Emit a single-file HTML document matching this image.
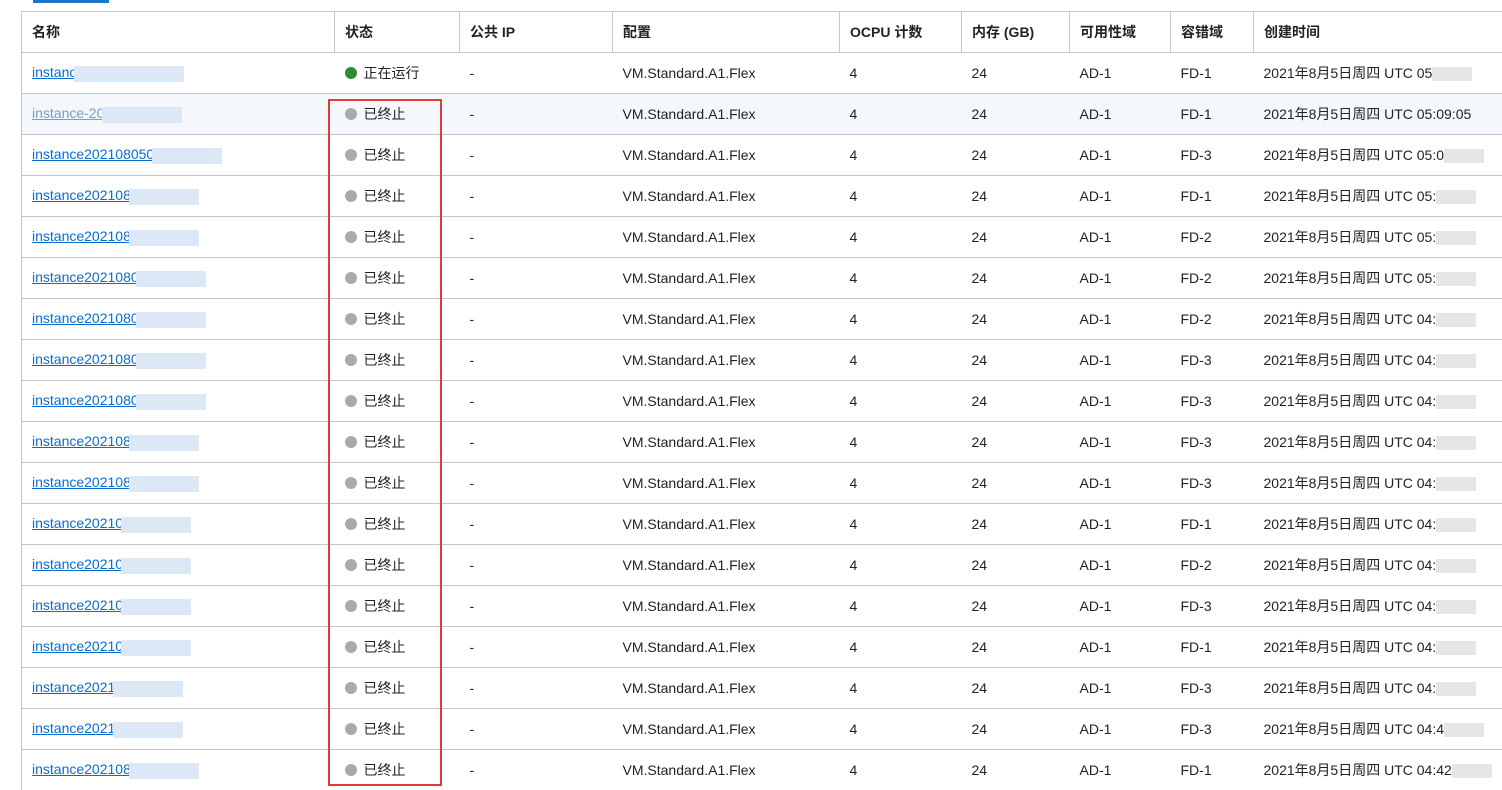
<!DOCTYPE html>
<html><head><meta charset="utf-8"><style>
body{margin:0;background:#fff;width:1502px;height:788px;overflow:hidden;position:relative;font-family:"Liberation Sans","Noto Sans CJK SC",sans-serif;font-size:14px;color:#222}
.bar{position:absolute;left:33px;top:0;width:76px;height:3px;background:#1c76c9}
table{position:absolute;left:21px;top:11px;border-collapse:collapse;table-layout:fixed;width:1490px}
td,th{height:40px;border-top:1px solid #c3c6cc;padding:0 0 0 10px;text-align:left;white-space:nowrap;overflow:hidden}
th{font-weight:bold;border-left:1px solid #c3c6cc;height:40px}
tr td:first-child,tr th:first-child{border-left:1px solid #c3c6cc}
tr.h td{background:#f4f7fc}
a{color:#0a6ccf;text-decoration:underline}
tr.h a{color:#6b9fd8}
.d{display:inline-block;width:12px;height:12px;border-radius:50%;background:#aaa;vertical-align:-1px;margin-right:7px}
.g{background:#2e8b36}
.blur{display:inline-block;width:70px;height:16px;background:#dde8f6;vertical-align:middle;margin-left:-10px}
.red{position:absolute;left:328px;top:99px;width:110px;height:683px;border:2px solid #e53935}
.tb{display:inline-block;width:40px;height:14px;background:#e6e6e6;vertical-align:middle}
</style></head><body>
<div class="bar"></div>
<table>
<colgroup><col style="width:313px"><col style="width:125px"><col style="width:153px"><col style="width:227px"><col style="width:122px"><col style="width:108px"><col style="width:101px"><col style="width:83px"><col style="width:258px"></colgroup>
<tr><th>名称</th><th>状态</th><th>公共 IP</th><th>配置</th><th>OCPU 计数</th><th>内存 (GB)</th><th>可用性域</th><th>容错域</th><th>创建时间</th></tr>
<tr><td><a>instance</a><span class="blur" style="width:110px"></span></td><td><span class="d g"></span>正在运行</td><td>-</td><td>VM.Standard.A1.Flex</td><td>4</td><td>24</td><td>AD-1</td><td>FD-1</td><td>2021年8月5日周四 UTC 05<span class="tb"></span></td></tr>
<tr class="h"><td><a>instance-202</a><span class="blur" style="width:80px"></span></td><td><span class="d"></span>已终止</td><td>-</td><td>VM.Standard.A1.Flex</td><td>4</td><td>24</td><td>AD-1</td><td>FD-1</td><td>2021年8月5日周四 UTC 05:09:05</td></tr>
<tr><td><a>instance2021080500</a><span class="blur"></span></td><td><span class="d"></span>已终止</td><td>-</td><td>VM.Standard.A1.Flex</td><td>4</td><td>24</td><td>AD-1</td><td>FD-3</td><td>2021年8月5日周四 UTC 05:0<span class="tb"></span></td></tr>
<tr><td><a>instance2021080</a><span class="blur"></span></td><td><span class="d"></span>已终止</td><td>-</td><td>VM.Standard.A1.Flex</td><td>4</td><td>24</td><td>AD-1</td><td>FD-1</td><td>2021年8月5日周四 UTC 05:<span class="tb"></span></td></tr>
<tr><td><a>instance2021080</a><span class="blur"></span></td><td><span class="d"></span>已终止</td><td>-</td><td>VM.Standard.A1.Flex</td><td>4</td><td>24</td><td>AD-1</td><td>FD-2</td><td>2021年8月5日周四 UTC 05:<span class="tb"></span></td></tr>
<tr><td><a>instance20210805</a><span class="blur"></span></td><td><span class="d"></span>已终止</td><td>-</td><td>VM.Standard.A1.Flex</td><td>4</td><td>24</td><td>AD-1</td><td>FD-2</td><td>2021年8月5日周四 UTC 05:<span class="tb"></span></td></tr>
<tr><td><a>instance20210805</a><span class="blur"></span></td><td><span class="d"></span>已终止</td><td>-</td><td>VM.Standard.A1.Flex</td><td>4</td><td>24</td><td>AD-1</td><td>FD-2</td><td>2021年8月5日周四 UTC 04:<span class="tb"></span></td></tr>
<tr><td><a>instance20210805</a><span class="blur"></span></td><td><span class="d"></span>已终止</td><td>-</td><td>VM.Standard.A1.Flex</td><td>4</td><td>24</td><td>AD-1</td><td>FD-3</td><td>2021年8月5日周四 UTC 04:<span class="tb"></span></td></tr>
<tr><td><a>instance20210805</a><span class="blur"></span></td><td><span class="d"></span>已终止</td><td>-</td><td>VM.Standard.A1.Flex</td><td>4</td><td>24</td><td>AD-1</td><td>FD-3</td><td>2021年8月5日周四 UTC 04:<span class="tb"></span></td></tr>
<tr><td><a>instance2021080</a><span class="blur"></span></td><td><span class="d"></span>已终止</td><td>-</td><td>VM.Standard.A1.Flex</td><td>4</td><td>24</td><td>AD-1</td><td>FD-3</td><td>2021年8月5日周四 UTC 04:<span class="tb"></span></td></tr>
<tr><td><a>instance2021080</a><span class="blur"></span></td><td><span class="d"></span>已终止</td><td>-</td><td>VM.Standard.A1.Flex</td><td>4</td><td>24</td><td>AD-1</td><td>FD-3</td><td>2021年8月5日周四 UTC 04:<span class="tb"></span></td></tr>
<tr><td><a>instance202108</a><span class="blur"></span></td><td><span class="d"></span>已终止</td><td>-</td><td>VM.Standard.A1.Flex</td><td>4</td><td>24</td><td>AD-1</td><td>FD-1</td><td>2021年8月5日周四 UTC 04:<span class="tb"></span></td></tr>
<tr><td><a>instance202108</a><span class="blur"></span></td><td><span class="d"></span>已终止</td><td>-</td><td>VM.Standard.A1.Flex</td><td>4</td><td>24</td><td>AD-1</td><td>FD-2</td><td>2021年8月5日周四 UTC 04:<span class="tb"></span></td></tr>
<tr><td><a>instance202108</a><span class="blur"></span></td><td><span class="d"></span>已终止</td><td>-</td><td>VM.Standard.A1.Flex</td><td>4</td><td>24</td><td>AD-1</td><td>FD-3</td><td>2021年8月5日周四 UTC 04:<span class="tb"></span></td></tr>
<tr><td><a>instance202108</a><span class="blur"></span></td><td><span class="d"></span>已终止</td><td>-</td><td>VM.Standard.A1.Flex</td><td>4</td><td>24</td><td>AD-1</td><td>FD-1</td><td>2021年8月5日周四 UTC 04:<span class="tb"></span></td></tr>
<tr><td><a>instance20210</a><span class="blur"></span></td><td><span class="d"></span>已终止</td><td>-</td><td>VM.Standard.A1.Flex</td><td>4</td><td>24</td><td>AD-1</td><td>FD-3</td><td>2021年8月5日周四 UTC 04:<span class="tb"></span></td></tr>
<tr><td><a>instance20210</a><span class="blur"></span></td><td><span class="d"></span>已终止</td><td>-</td><td>VM.Standard.A1.Flex</td><td>4</td><td>24</td><td>AD-1</td><td>FD-3</td><td>2021年8月5日周四 UTC 04:4<span class="tb"></span></td></tr>
<tr><td><a>instance2021080</a><span class="blur"></span></td><td><span class="d"></span>已终止</td><td>-</td><td>VM.Standard.A1.Flex</td><td>4</td><td>24</td><td>AD-1</td><td>FD-1</td><td>2021年8月5日周四 UTC 04:42<span class="tb"></span></td></tr>
</table>
<div class="red"></div>
</body></html>
